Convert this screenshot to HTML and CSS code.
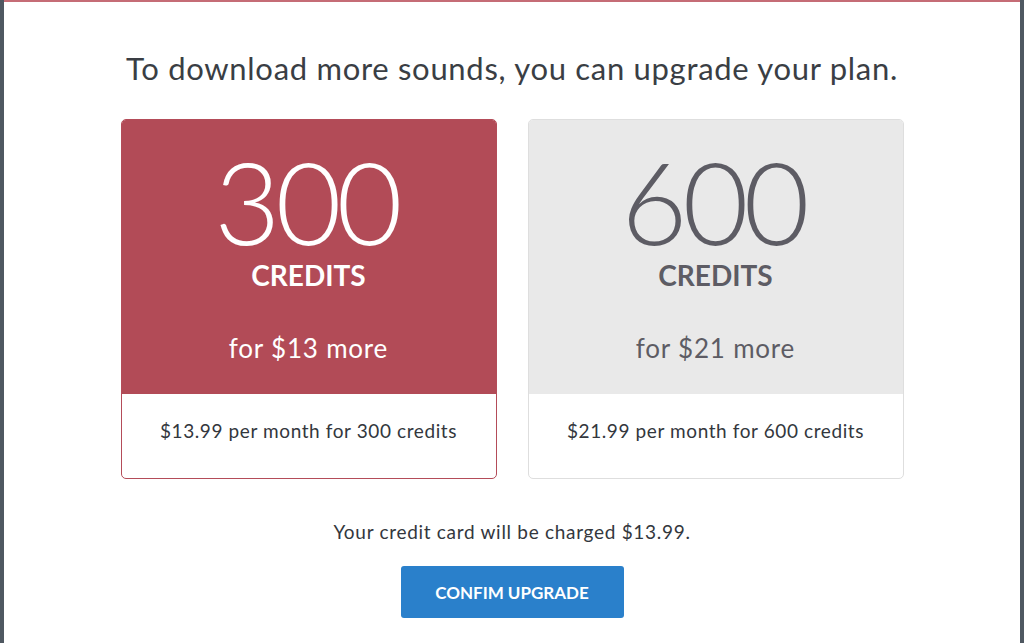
FILE: index.html
```html
<!DOCTYPE html>
<html lang="en">
<head>
    <meta charset="UTF-8">
    <title>Upgrade your plan</title>
    <link rel="stylesheet" href="styles.css">
</head>
<body>
    <div class="modal">
        <h1 class="title">To download more sounds, you can upgrade your plan.</h1>
        <div class="plans">
            <div class="plan selected">
                <div class="plan-top">
                    <div class="plan-number">300</div>
                    <div class="plan-unit">CREDITS</div>
                    <div class="plan-more">for $13 more</div>
                </div>
                <div class="plan-bottom">$13.99 per month for 300 credits</div>
            </div>
            <div class="plan">
                <div class="plan-top">
                    <div class="plan-number">600</div>
                    <div class="plan-unit">CREDITS</div>
                    <div class="plan-more">for $21 more</div>
                </div>
                <div class="plan-bottom">$21.99 per month for 600 credits</div>
            </div>
        </div>
        <p class="charge">Your credit card will be charged $13.99.</p>
        <button class="confirm">CONFIM UPGRADE</button>
    </div>
</body>
</html>
```

FILE: styles.css
```css
html, body {
    margin: 0;
    height: 100%;
}

body {
    background-color: #4f5861;
    font-family: Lato, "Open Sans", sans-serif;
    overflow: hidden;
}

.modal {
    margin: 0 4px;
    height: 643px;
    background-color: #fff;
    border-top: 2px solid #c56c76;
    box-sizing: border-box;
    text-align: center;
    color: #33373d;
}

.title {
    margin: 0;
    padding-top: 48px;
    font-size: 31px;
    font-weight: 400;
    line-height: 36px;
    letter-spacing: 0.7px;
    color: #3a3e44;
}

.plans {
    display: flex;
    justify-content: center;
    gap: 31px;
    margin-top: 33px;
}

.plan {
    width: 376px;
    height: 360px;
    box-sizing: border-box;
    border: 1px solid #dedede;
    border-radius: 5px;
    overflow: hidden;
    display: flex;
    flex-direction: column;
}

.plan-top {
    height: 274px;
    background-color: #e9e9e9;
    color: #5d5c64;
    display: flex;
    flex-direction: column;
    align-items: center;
}

.plan-number {
    margin-top: 24px;
    padding-right: 5px;
    font-size: 114px;
    font-weight: 300;
    line-height: 114px;
    letter-spacing: -5px;
}

.plan-unit {
    font-size: 28px;
    font-weight: 700;
    line-height: 34px;
}

.plan-more {
    margin-top: 40px;
    font-size: 26px;
    line-height: 32px;
    letter-spacing: 0.8px;
}

.plan-bottom {
    flex: 1;
    display: flex;
    align-items: center;
    justify-content: center;
    padding-bottom: 12px;
    font-size: 19px;
    letter-spacing: 0.6px;
    color: #33373d;
}

.selected {
    border-color: #b44c59;
}

.selected .plan-top {
    background-color: #b24b57;
    color: #fff;
}

.charge {
    margin: 40px 0 0;
    font-size: 19px;
    line-height: 26px;
    letter-spacing: 0.7px;
}

.confirm {
    margin-top: 21px;
    width: 223px;
    height: 52px;
    border: 0;
    border-radius: 3px;
    background-color: #2a80cb;
    color: #fff;
    font-family: inherit;
    font-size: 17px;
    font-weight: 700;
}
```
